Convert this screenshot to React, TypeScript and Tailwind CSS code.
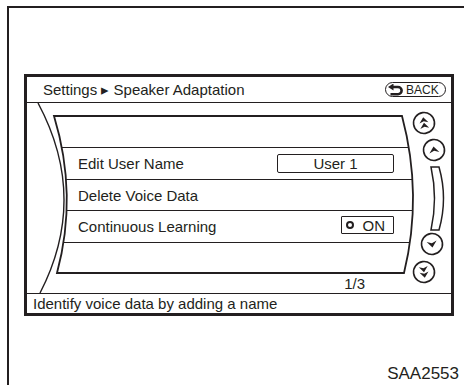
import { type ReactNode } from 'react';

const INK = '#231f20';

interface Row {
  label: string;
  ml: string;
  mr: string;
  h: string;
  control?: ReactNode;
}

function UserBox() {
  return (
    <div className="flex h-[19px] w-[117px] items-center justify-center rounded-[2px] border-[1.5px] border-[#231f20] text-[15px] leading-none">
      User 1
    </div>
  );
}

function OnBox() {
  return (
    <div className="-mt-[3px] flex h-[18px] w-[53px] items-center justify-end gap-[9px] rounded-[1px] border-[1.5px] border-[#231f20] pr-[8px] text-[15px] leading-none">
      <span className="h-[8px] w-[8px] rounded-full border-2 border-[#231f20]" />
      <span>ON</span>
    </div>
  );
}

const ROWS: Row[] = [
  { label: 'Edit User Name', ml: 'ml-[35px]', mr: 'mr-[42px]', h: 'h-[31px]', control: <UserBox /> },
  { label: 'Delete Voice Data', ml: 'ml-[39px]', mr: 'mr-[39px]', h: 'h-[30px]' },
  { label: 'Continuous Learning', ml: 'ml-[40px]', mr: 'mr-[38px]', h: 'h-[31px]', control: <OnBox /> },
];

function BackIcon() {
  return (
    <svg width="16" height="12" viewBox="0 0 16 12" fill="none">
      <path d="M4 3 H10 A3.6 3.6 0 0 1 10 10.2 H2.5" stroke={INK} strokeWidth="2.6" />
      <path d="M0 3 L5.5 -0.5 L5.5 6.5 Z" fill={INK} />
    </svg>
  );
}

function Arrow({ x, y, up, double }: { x: number; y: number; up: boolean; double?: boolean }) {
  const head = 'M-5 2.8 L0 -3.6 L5 2.8 L0 0.8 Z';
  return (
    <g transform={`translate(${x} ${y}) rotate(${up ? -8 : 172})`}>
      <circle r="10.5" fill="white" stroke={INK} strokeWidth="1.6" />
      {double ? (
        <>
          <path d={head} transform="translate(0 -2.6) scale(0.9)" fill={INK} />
          <path d={head} transform="translate(0 3) scale(0.9)" fill={INK} />
        </>
      ) : (
        <path d={head} fill={INK} />
      )}
    </g>
  );
}

export default function App() {
  return (
    <div className="h-[385px] w-[464px] overflow-hidden bg-white font-['Liberation_Sans',Arial,sans-serif] text-[#231f20]">
      <div className="ml-[7px] mt-[6px] h-full border-l-2 border-t-2 border-[#231f20] pl-[15px] pt-[66px]">
        <div className="flex h-[242px] w-[430px] flex-col border-[3px] border-[#231f20]">
          <header className="flex h-[26px] shrink-0 items-center justify-between border-b border-[#231f20] pl-[16px] pr-[5px]">
            <span className="text-[15px] leading-none">Settings ▸ Speaker Adaptation</span>
            <div className="flex h-[15px] w-[61px] items-center gap-[2px] rounded-full border-[1.5px] border-[#231f20] pl-[2px] text-[12px] leading-none">
              <BackIcon />
              <span>BACK</span>
            </div>
          </header>

          <div className="relative h-[190px] shrink-0">
            <svg className="pointer-events-none absolute inset-0" width="424" height="190" viewBox="0 0 424 190" fill="none">
              <path d="M11 0 Q62 95 13 190" stroke={INK} strokeWidth="1.4" />
              <path d="M27 13 L375 13 Q396 92 377 170 L30 170 Q51 92 27 13 Z" stroke={INK} strokeWidth="1.8" />
              <path d="M404 64 L412 64 Q421 95.5 412 127 L404 127 Q411 95.5 404 64 Z" stroke={INK} strokeWidth="1.5" />
              <Arrow x={397} y={20} up double />
              <Arrow x={407} y={47} up />
              <Arrow x={405} y={141} up={false} />
              <Arrow x={397} y={169} up={false} double />
            </svg>

            <div className="flex flex-col pt-[14px]">
              <div className="h-[30px]" />
              {ROWS.map((row) => (
                <div key={row.label}>
                  <div className={`h-px bg-[#231f20] ${row.ml} ${row.mr}`} />
                  <div className={`flex items-center justify-between pl-[51px] pr-[57px] text-[15px] leading-none ${row.h}`}>
                    <span>{row.label}</span>
                    {row.control}
                  </div>
                </div>
              ))}
              <div className="ml-[37px] mr-[41px] h-px bg-[#231f20]" />
              <div className="h-[30px]" />
              <div className="flex h-[20px] items-center justify-end pr-[86px] text-[15px] leading-none">1/3</div>
            </div>
          </div>

          <div className="flex h-[20px] shrink-0 items-center border-t border-[#231f20] pl-[6px] text-[15px] leading-none">
            Identify voice data by adding a name
          </div>
        </div>

        <div className="mt-[49px] flex justify-end pr-[5px] text-[17px] leading-none">SAA2553</div>
      </div>
    </div>
  );
}
